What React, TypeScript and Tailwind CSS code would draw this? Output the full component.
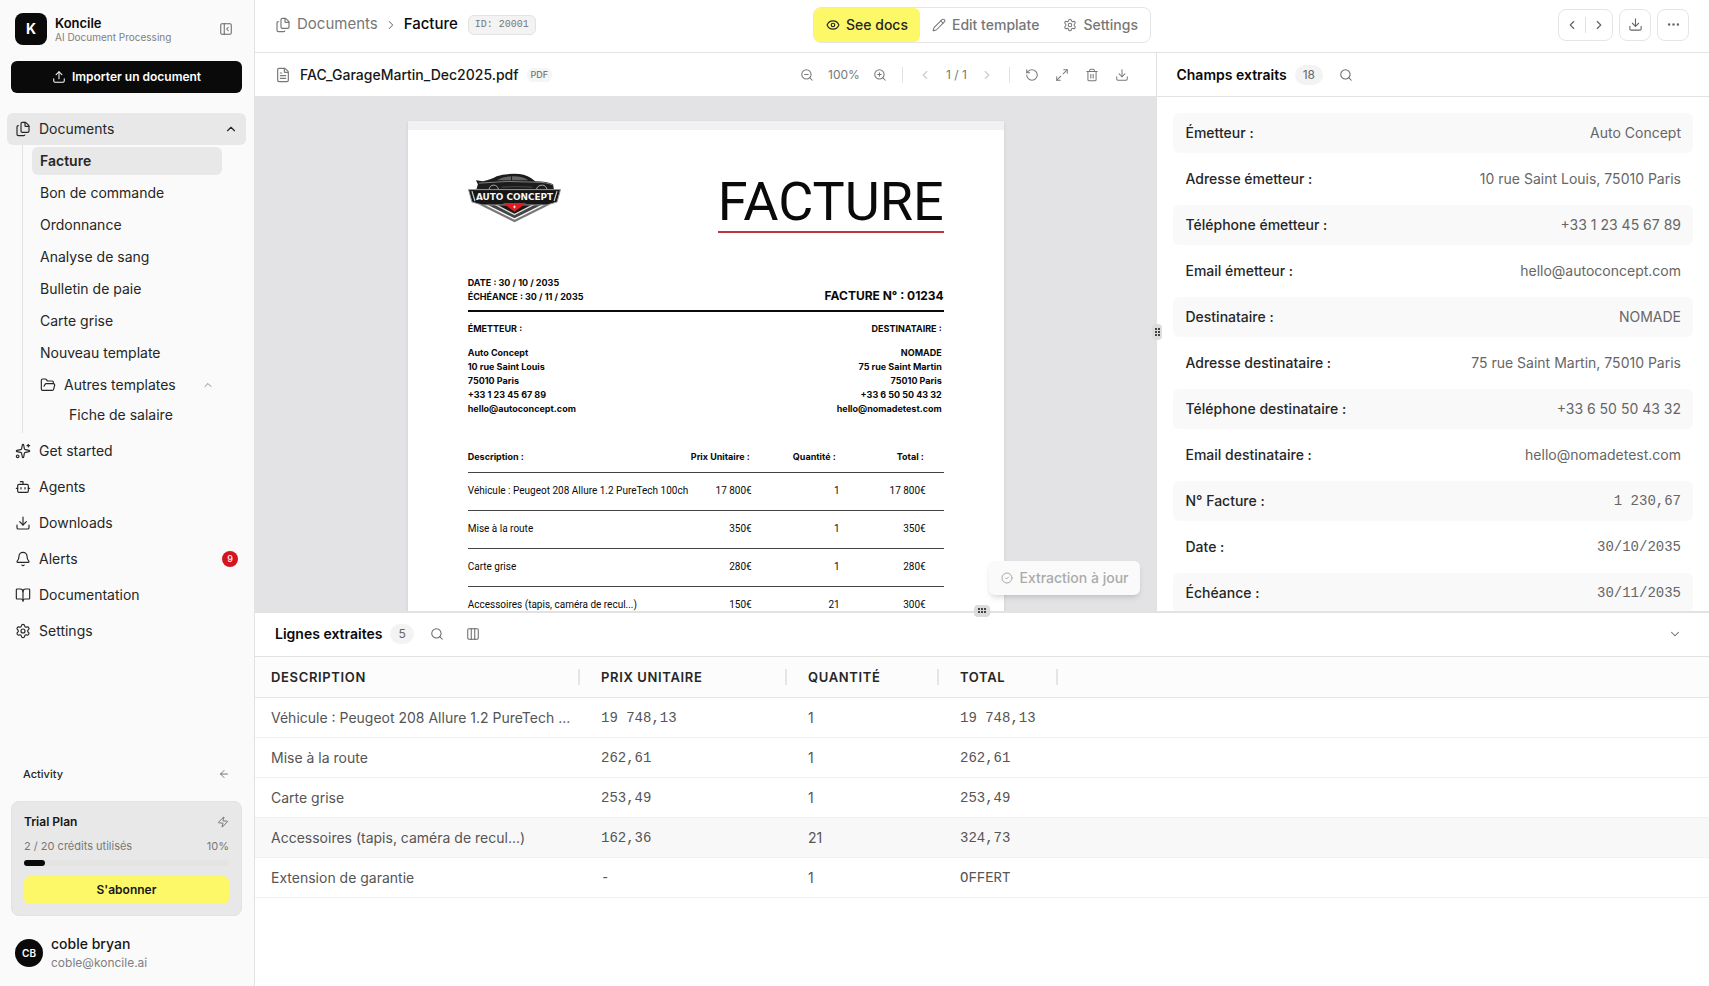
import { type ReactNode } from 'react'
import {
  ArrowLeft,
  Bell,
  BookOpen,
  Bot,
  ChevronDown,
  ChevronLeft,
  ChevronRight,
  ChevronUp,
  CircleCheck,
  Columns3,
  Download,
  Ellipsis,
  Eye,
  FileText,
  Files,
  FolderOpen,
  Maximize2,
  PanelLeftClose,
  Pencil,
  RotateCcw,
  Search,
  Settings,
  Sparkles,
  Trash2,
  Upload,
  Zap,
  ZoomIn,
  ZoomOut,
} from 'lucide-react'

const templates = [
  'Facture',
  'Bon de commande',
  'Ordonnance',
  'Analyse de sang',
  'Bulletin de paie',
  'Carte grise',
  'Nouveau template',
]

const mainNav = [
  { label: 'Get started', icon: Sparkles },
  { label: 'Agents', icon: Bot },
  { label: 'Downloads', icon: Download },
  { label: 'Alerts', icon: Bell, badge: 9 },
  { label: 'Documentation', icon: BookOpen },
  { label: 'Settings', icon: Settings },
]

const fields = [
  { label: 'Émetteur :', value: 'Auto Concept' },
  { label: 'Adresse émetteur :', value: '10 rue Saint Louis, 75010 Paris' },
  { label: 'Téléphone émetteur :', value: '+33 1 23 45 67 89' },
  { label: 'Email émetteur :', value: 'hello@autoconcept.com' },
  { label: 'Destinataire :', value: 'NOMADE' },
  { label: 'Adresse destinataire :', value: '75 rue Saint Martin, 75010 Paris' },
  { label: 'Téléphone destinataire :', value: '+33 6 50 50 43 32' },
  { label: 'Email destinataire :', value: 'hello@nomadetest.com' },
  { label: 'N° Facture :', value: '1 230,67', mono: true },
  { label: 'Date :', value: '30/10/2035', mono: true },
  { label: 'Échéance :', value: '30/11/2035', mono: true },
]

const lines = [
  { description: 'Véhicule : Peugeot 208 Allure 1.2 PureTech ...', price: '19 748,13', qty: '1', total: '19 748,13' },
  { description: 'Mise à la route', price: '262,61', qty: '1', total: '262,61' },
  { description: 'Carte grise', price: '253,49', qty: '1', total: '253,49' },
  { description: 'Accessoires (tapis, caméra de recul...)', price: '162,36', qty: '21', total: '324,73', active: true },
  { description: 'Extension de garantie', price: '-', qty: '1', total: 'OFFERT' },
]

const invoiceRows = [
  ['Véhicule : Peugeot 208 Allure 1.2 PureTech 100ch', '17 800€', '1', '17 800€'],
  ['Mise à la route', '350€', '1', '350€'],
  ['Carte grise', '280€', '1', '280€'],
  ['Accessoires (tapis, caméra de recul...)', '150€', '21', '300€'],
]

const mono = "font-['Liberation_Mono',monospace]"

function IconButton({ label, children }: { label: string; children: ReactNode }) {
  return (
    <button type="button" aria-label={label} className="flex shrink-0 items-center justify-center">
      {children}
    </button>
  )
}

function Sidebar() {
  return (
    <aside className="flex w-[255px] shrink-0 flex-col border-r border-[#e2e2e2] bg-[#fafafa] text-[#262626]">
      <div className="flex items-center gap-2 pt-[13px] pr-[21px] pl-[15px]">
        <div className="flex size-8 items-center justify-center rounded-lg bg-[#0a0a0a] text-sm font-bold text-white">K</div>
        <div className="flex-1">
          <div className="text-[13px] leading-4 font-semibold text-[#0a0a0a]">Koncile</div>
          <div className="text-[10px] leading-3 text-[#808080]">AI Document Processing</div>
        </div>
        <IconButton label="Collapse sidebar">
          <PanelLeftClose size={14} strokeWidth={1.75} className="text-[#666]" />
        </IconButton>
      </div>

      <button
        type="button"
        className="mr-3 ml-[11px] mt-4 flex h-8 items-center justify-center gap-1.5 rounded-md bg-[#0a0a0a] text-xs font-semibold text-white"
      >
        <Upload size={14} strokeWidth={1.75} />
        Importer un document
      </button>

      <nav className="mt-5 pr-2 pl-[7px] text-sm">
        <button type="button" className="flex h-8 w-full items-center gap-2 rounded-md bg-[#e8e8e8] px-2">
          <Files size={16} strokeWidth={1.75} />
          Documents
          <ChevronUp size={14} strokeWidth={2} className="ml-auto" />
        </button>

        <ul className="ml-[15px] border-l border-[#e2e2e2] pr-6 pb-1 pl-[9px]">
          {templates.map((name, i) => (
            <li key={name} className="flex h-8 items-center">
              <a
                href="#"
                className={`flex h-7 flex-1 items-center rounded-md px-2 ${i === 0 ? 'bg-[#e8e8e8] font-semibold' : ''}`}
              >
                {name}
              </a>
            </li>
          ))}
          <li>
            <button type="button" className="flex h-8 w-full items-center gap-2 px-2">
              <FolderOpen size={16} strokeWidth={1.75} />
              Autres templates
              <ChevronUp size={12} strokeWidth={1.5} className="ml-auto text-[#666]" />
            </button>
          </li>
          <li>
            <a href="#" className="flex h-7 items-center pl-[37px]">
              Fiche de salaire
            </a>
          </li>
        </ul>

        <ul>
          {mainNav.map(({ label, icon: Icon, badge }) => (
            <li key={label}>
              <a href="#" className="flex h-9 items-center gap-2 px-2">
                <Icon size={16} strokeWidth={1.75} />
                {label}
                {badge ? (
                  <span className="ml-auto flex size-4 items-center justify-center rounded-full bg-[#d4141f] text-[9px] font-medium text-white">
                    {badge}
                  </span>
                ) : null}
              </a>
            </li>
          ))}
        </ul>
      </nav>

      <div className="mt-auto flex items-center justify-between pr-6 pl-[23px] text-[11px] leading-4 font-medium">
        Activity
        <IconButton label="Expand activity">
          <ArrowLeft size={12} strokeWidth={1.75} className="text-[#666]" />
        </IconButton>
      </div>

      <section className="mr-3 ml-[11px] mt-[19px] rounded-lg border border-[#e2e2e2] bg-[#e8e8e8] px-3 pt-3 pb-[11px]">
        <div className="flex items-center justify-between text-xs font-semibold text-[#171717]">
          Trial Plan
          <Zap size={12} strokeWidth={1.75} className="text-[#666]" />
        </div>
        <div className="mt-2 flex justify-between text-[11px] leading-4 text-[#777]">
          <span>2 / 20 crédits utilisés</span>
          <span>10%</span>
        </div>
        <div className="mt-1.5 h-1.5 rounded-full bg-[#e4e4e4]">
          <div className="h-full w-1/10 rounded-full bg-[#0a0a0a]" />
        </div>
        <button type="button" className="mt-2.5 h-7 w-full rounded-md bg-[#fdf867] text-xs font-semibold text-[#171717]">
          S'abonner
        </button>
      </section>

      <div className="flex items-center gap-2 px-[15px] pt-[18px] pb-3.5">
        <div className="flex size-7 items-center justify-center rounded-full bg-[#0a0a0a] text-[10px] font-semibold text-white">
          CB
        </div>
        <div>
          <div className="text-sm leading-5 font-medium text-[#171717]">coble bryan</div>
          <div className="text-xs leading-[18px] text-[#808080]">coble@koncile.ai</div>
        </div>
      </div>
    </aside>
  )
}

function TopBar() {
  return (
    <header className="grid h-[53px] shrink-0 grid-cols-[1fr_auto_1fr] items-center border-b border-[#e2e2e2] pb-[3px] pr-5 pl-5">
      <nav className="flex items-center text-[#777]">
        <Files size={16} strokeWidth={1.75} />
        <a href="#" className="ml-1.5 text-[15px]">
          Documents
        </a>
        <ChevronRight size={14} strokeWidth={1.75} className="mx-1.5" />
        <span className="text-[15px] font-medium text-[#0a0a0a]">Facture</span>
        <span className={`ml-2.5 rounded-md border border-[#e2e2e2] bg-[#f3f3f3] px-1.5 text-[10px] leading-[18px] ${mono}`}>
          ID: 20001
        </span>
      </nav>

      <div className="flex h-9 rounded-lg border border-[#e5e5e5] text-sm font-medium text-[#777]">
        <button type="button" className="flex items-center gap-1.5 rounded-md bg-[#fdf867] px-3 text-[#262626]">
          <Eye size={14} />
          See docs
        </button>
        <button type="button" className="flex items-center gap-1.5 px-3">
          <Pencil size={14} strokeWidth={1.75} />
          Edit template
        </button>
        <button type="button" className="flex items-center gap-1.5 px-3">
          <Settings size={14} strokeWidth={1.75} />
          Settings
        </button>
      </div>

      <div className="flex items-center justify-end gap-1.5 text-[#666]">
        <div className="flex h-8 items-center rounded-lg border border-[#e5e5e5]">
          <button type="button" aria-label="Previous" className="px-1.5">
            <ChevronLeft size={14} />
          </button>
          <div className="h-4 w-px bg-[#e2e2e2]" />
          <button type="button" aria-label="Next" className="px-1.5">
            <ChevronRight size={14} />
          </button>
        </div>
        <button type="button" aria-label="Download" className="flex size-8 items-center justify-center rounded-lg border border-[#e5e5e5]">
          <Download size={15} strokeWidth={1.75} />
        </button>
        <button type="button" aria-label="More" className="flex size-8 items-center justify-center rounded-lg border border-[#e5e5e5]">
          <Ellipsis size={15} />
        </button>
      </div>
    </header>
  )
}

function ViewerToolbar() {
  return (
    <div className="flex h-[43px] shrink-0 items-center bg-white pr-[27px] pl-5 text-xs text-[#777]">
      <FileText size={16} strokeWidth={1.75} />
      <span className="ml-[9px] text-sm font-medium text-[#171717]">FAC_GarageMartin_Dec2025.pdf</span>
      <span className="ml-2 rounded-md bg-[#f5f5f5] px-1 text-[9px] leading-[14px] font-medium">PDF</span>
      <div className="ml-auto flex items-center">
        <IconButton label="Zoom out">
          <ZoomOut size={14} strokeWidth={1.75} />
        </IconButton>
        <span className="w-[59px] text-center">100%</span>
        <IconButton label="Zoom in">
          <ZoomIn size={14} strokeWidth={1.75} />
        </IconButton>
        <div className="mx-[15px] h-4 w-px bg-[#e2e2e2]" />
        <IconButton label="Previous page">
          <ChevronLeft size={14} className="text-[#ccc]" />
        </IconButton>
        <span className="w-12 text-center">1 / 1</span>
        <IconButton label="Next page">
          <ChevronRight size={14} className="text-[#ccc]" />
        </IconButton>
        <div className="mx-[15px] h-4 w-px bg-[#e2e2e2]" />
        <div className="flex gap-4">
          <IconButton label="Rotate">
            <RotateCcw size={14} strokeWidth={1.75} />
          </IconButton>
          <IconButton label="Full screen">
            <Maximize2 size={14} strokeWidth={1.75} />
          </IconButton>
          <IconButton label="Delete">
            <Trash2 size={14} strokeWidth={1.75} />
          </IconButton>
          <IconButton label="Download file">
            <Download size={14} strokeWidth={1.75} />
          </IconButton>
        </div>
      </div>
    </div>
  )
}

function AutoConceptLogo() {
  return (
    <svg width="93" height="50" viewBox="0 0 94 50" role="img" aria-label="Auto Concept">
      {/* shield point */}
      <path d="M12 32 L82 32 L47 49.5 Z" fill="#777" />
      <path d="M17 32 L77 32 L47 47 Z" fill="#fff" />
      <path d="M20 32 L74 32 L47 45.5 Z" fill="#444" />
      <path d="M27 32 L67 32 L47 42.5 Z" fill="#ddd" />
      <path d="M30 32 L64 32 L47 41 Z" fill="#171717" />
      {/* car */}
      <path
        d="M8 7 L15 8 Q24 6 29 3 Q36 0.5 47 0.5 Q57 0.5 64 5 L68 8 Q80 8 86 11 L87 18 L8 18 L10 11 Z"
        fill="#1c1c1c"
      />
      <path d="M29 7 Q36 3 46 3 Q56 3 61 7 Z" fill="#666" />
      <path d="M44 3 V7" stroke="#1c1c1c" />
      <path d="M11 10 Q40 7 68 9 Q80 9 86 12" fill="none" stroke="#999" strokeWidth=".8" />
      <path d="M21 17 Q22 12 26 12 Q30 12 31 17 M69 17 Q70 12 75 12 Q79 12 80 17" fill="none" stroke="#aaa" />
      <path d="M34 14 Q50 13 65 14" stroke="#666" strokeWidth=".6" fill="none" />
      {/* name plate */}
      <path d="M0.5 16.5 H93.5 L90 29 L80 32 H14 L4 29 Z" fill="#161616" stroke="#999" />
      <path d="M4 18 L7 28 M90 18 L87 28" stroke="#ccc" strokeWidth="1.2" />
      <path d="M35 30 L59 30 L47 39 Z" fill="#e01b22" />
      <path d="M45.5 34 H48.5 M47 32.5 V35.5" stroke="#fff" strokeWidth=".8" />
      <text
        x="47"
        y="27"
        textAnchor="middle"
        fontFamily="DejaVu Sans, sans-serif"
        fontSize="9"
        fontWeight="700"
        fill="#f5f5f5"
      >
        AUTO CONCEPT
      </text>
    </svg>
  )
}

function Invoice() {
  return (
    <article className="mx-auto mt-[25px] w-[596px] max-w-full border-t-[9px] border-[#f1f1f3] bg-white pt-[43px] pr-[60px] pb-12 pl-[60px] text-[9px] text-[#0a0a0a] shadow-sm">
      <div className="flex items-start justify-between">
        <AutoConceptLogo />
        <div className="mt-1 border-b-2 border-[#c2343f] pb-1 font-['Roboto',sans-serif] text-[54px] leading-[50px]">FACTURE</div>
      </div>

      <div className="mt-[43px] flex items-end justify-between border-b-2 border-[#0a0a0a] pb-1.5 font-bold">
        <div className="leading-[14px]">
          <div>DATE : 30 / 10 / 2035</div>
          <div>ÉCHÉANCE : 30 / 11 / 2035</div>
        </div>
        <div className="text-xs leading-4">FACTURE N° : 01234</div>
      </div>

      <div className="mt-2.5 flex justify-between leading-[14px] font-bold">
        <div>
          <div className="mb-2.5">ÉMETTEUR :</div>
          <div>Auto Concept</div>
          <div>10 rue Saint Louis</div>
          <div>75010 Paris</div>
          <div>+33 1 23 45 67 89</div>
          <div>hello@autoconcept.com</div>
        </div>
        <div className="pr-0.5 text-right">
          <div className="mb-2.5">DESTINATAIRE :</div>
          <div>NOMADE</div>
          <div>75 rue Saint Martin</div>
          <div>75010 Paris</div>
          <div>+33 6 50 50 43 32</div>
          <div>hello@nomadetest.com</div>
        </div>
      </div>

      <table className="mt-[26px] w-full table-fixed text-right leading-[14px]">
        <colgroup>
          <col />
          <col className="w-[62px]" />
          <col className="w-[88px]" />
          <col className="w-[104px]" />
        </colgroup>
        <thead>
          <tr className="h-[30px] border-b border-[#444]">
            <th className="text-left">Description :</th>
            <th className="whitespace-nowrap">
              <span className="flex justify-end pr-0.5">Prix Unitaire :</span>
            </th>
            <th className="pr-1">Quantité :</th>
            <th className="pr-5">Total :</th>
          </tr>
        </thead>
        <tbody className="font-['Roboto',sans-serif] text-[10px]">
          {invoiceRows.map(([description, price, qty, total]) => (
            <tr key={description} className="h-[38px] border-b border-[#444]">
              <td className="text-left whitespace-nowrap">{description}</td>
              <td>{price}</td>
              <td>{qty}</td>
              <td className="pr-[18px]">{total}</td>
            </tr>
          ))}
        </tbody>
      </table>
    </article>
  )
}

function Viewer() {
  return (
    <section className="relative flex min-w-0 flex-1 flex-col">
      <ViewerToolbar />
      <div className="min-h-0 flex-1 overflow-hidden bg-[#e3e3e5]">
        <Invoice />
      </div>
      <button
        type="button"
        disabled
        className="absolute right-4 bottom-4 flex h-[34px] items-center gap-1.5 rounded-md bg-[#fafafa] px-3 text-sm font-medium text-[#aaa] shadow-md"
      >
        <CircleCheck size={12} />
        Extraction à jour
      </button>
      <Grip className="top-1/2 -right-1.5 h-4 w-2.5 -translate-y-1/2 grid-cols-[2px_2px]" count={6} />
    </section>
  )
}

function Grip({ className, count }: { className: string; count: number }) {
  return (
    <div className={`absolute z-10 grid place-content-center gap-px rounded-sm bg-[#dcdcdc] ${className}`}>
      {Array.from({ length: count }, (_, i) => (
        <span key={i} className="size-0.5 bg-[#444]" />
      ))}
    </div>
  )
}

function FieldsPanel() {
  return (
    <section className="flex w-[38%] shrink-0 flex-col border-l border-[#e2e2e2]">
      <div className="flex h-11 shrink-0 items-center border-b border-[#e2e2e2] pl-[19px]">
        <h2 className="text-sm font-semibold text-[#0a0a0a]">Champs extraits</h2>
        <span className="ml-2 rounded-full bg-[#f3f3f3] px-2 text-xs leading-5 text-[#666]">18</span>
        <button type="button" aria-label="Search fields" className="ml-4 text-[#666]">
          <Search size={14} strokeWidth={1.75} />
        </button>
      </div>
      <dl className="flex min-h-0 flex-1 flex-col gap-1.5 overflow-hidden px-4 pt-4 text-sm">
        {fields.map((field, i) => (
          <div
            key={field.label}
            className={`flex h-10 shrink-0 items-center justify-between rounded-md px-3 ${i % 2 === 0 ? 'bg-[#f9f9f9]' : ''}`}
          >
            <dt className="font-medium text-[#262626]">{field.label}</dt>
            <dd className={`text-[#666] ${field.mono ? mono : ''}`}>{field.value}</dd>
          </div>
        ))}
      </dl>
    </section>
  )
}

function HeaderCell({ children }: { children: ReactNode }) {
  return (
    <th className="p-0">
      <div className="flex h-4 items-center border-r-2 border-[#e5e5e5] pl-[21px]">{children}</div>
    </th>
  )
}

function LinesPanel() {
  return (
    <section className="relative shrink-0 basis-[40.2%] border-t-2 border-[#e2e2e2]">
      <Grip className="-top-2 left-1/2 h-3 w-4 -translate-x-1/2 grid-cols-[2px_2px_2px]" count={6} />
      <div className="flex h-11 items-center border-b border-[#e2e2e2] pr-[27px] pl-5 text-[#666]">
        <h2 className="text-sm font-semibold text-[#0a0a0a]">Lignes extraites</h2>
        <span className="ml-2 rounded-full bg-[#f3f3f3] px-2 text-xs leading-5">5</span>
        <button type="button" aria-label="Search lines" className="ml-4">
          <Search size={14} strokeWidth={1.75} />
        </button>
        <button type="button" aria-label="Columns" className="ml-[22px]">
          <Columns3 size={14} strokeWidth={1.75} />
        </button>
        <button type="button" aria-label="Collapse lines" className="ml-auto">
          <ChevronDown size={14} strokeWidth={1.75} />
        </button>
      </div>
      <table className="w-full table-fixed text-left text-sm text-[#555]">
        <colgroup>
          <col className="w-[325px]" />
          <col className="w-[207px]" />
          <col className="w-[152px]" />
          <col className="w-[119px]" />
          <col />
        </colgroup>
        <thead>
          <tr className="h-[41px] border-b border-[#e5e5e5] bg-[#fcfcfc] text-[13px] tracking-wider text-[#262626] uppercase [&_th]:font-semibold">
            <th className="p-0">
              <div className="flex h-4 items-center border-r-2 border-[#e5e5e5] pl-4">Description</div>
            </th>
            <HeaderCell>Prix unitaire</HeaderCell>
            <HeaderCell>Quantité</HeaderCell>
            <HeaderCell>Total</HeaderCell>
            <th />
          </tr>
        </thead>
        <tbody>
          {lines.map((line) => (
            <tr key={line.description} className={`h-10 border-b border-[#f0f0f0] ${line.active ? 'bg-[#f8f8f8]' : ''}`}>
              <td className="truncate pr-1 pl-4">{line.description}</td>
              <td className={`pl-[21px] ${mono}`}>{line.price}</td>
              <td className="pl-[21px]">{line.qty}</td>
              <td className={`pl-[21px] ${mono}`}>{line.total}</td>
              <td />
            </tr>
          ))}
        </tbody>
      </table>
    </section>
  )
}

export default function App() {
  return (
    <div className="flex h-screen overflow-hidden bg-white font-['Inter',sans-serif]">
      <Sidebar />
      <main className="flex min-w-0 flex-1 flex-col">
        <TopBar />
        <div className="flex min-h-0 flex-1 flex-col">
          <div className="flex min-h-0 flex-1">
            <Viewer />
            <FieldsPanel />
          </div>
          <LinesPanel />
        </div>
      </main>
    </div>
  )
}
